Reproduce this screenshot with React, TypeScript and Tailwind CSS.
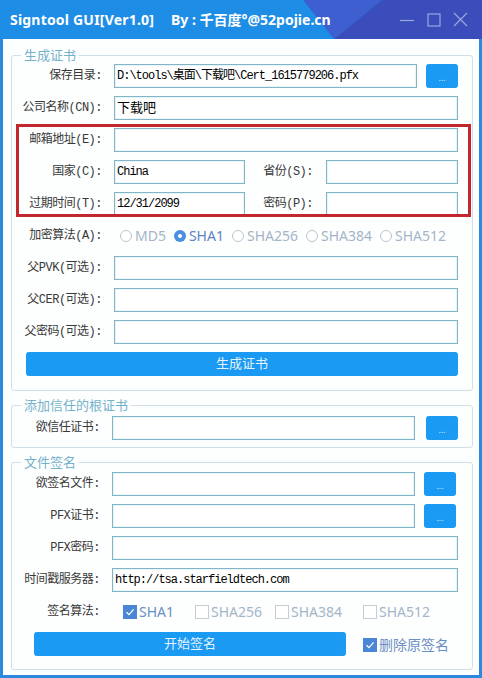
import React from 'react';

const mono = "font-['Liberation_Mono','Noto_Sans_CJK_SC',monospace]";
const ui = "font-['Noto_Sans','Noto_Sans_CJK_SC',sans-serif]";

function Label({ text, w = 'w-[90px]' }: { text: string; w?: string }) {
  return (
    <div className={`${w} shrink-0 text-right text-[12px] leading-none text-[#383838] ${mono} tracking-[-0.5px]`}>
      {text}
    </div>
  );
}

function Field({ w, value = '', cjk = false }: { w: string; value?: string; cjk?: boolean }) {
  return (
    <div
      className={`${w} h-[24px] shrink-0 border border-[#84b5c7] bg-white shadow-[inset_0_0_0_1px_#e6f5f9] flex items-center px-[2px] text-[12px] text-black whitespace-nowrap overflow-hidden ${
        cjk ? ui + ' text-[13px]' : mono + ' tracking-[-1px]'
      }`}
    >
      {value}
    </div>
  );
}

function Browse() {
  return (
    <div className="w-[32px] h-[24px] shrink-0 rounded-[3px] bg-[#1a9af2] flex items-center justify-center text-[9px] text-[#cfe9ff] pt-[4px]">
      ...
    </div>
  );
}

function Radio({ label, checked = false }: { label: string; checked?: boolean }) {
  return (
    <div className="flex items-center gap-[3px]">
      <div
        className={`w-[12px] h-[12px] rounded-full flex items-center justify-center ${
          checked ? 'bg-[#4b8fe2]' : 'border border-[#bcc6ce] bg-white'
        }`}
      >
        {checked && <div className="w-[4px] h-[4px] rounded-full bg-white" />}
      </div>
      <span className={`text-[14px] leading-none ${checked ? 'text-[#5d84c2]' : 'text-[#a3b5c8]'}`}>{label}</span>
    </div>
  );
}

function Check({ label, checked = false, w }: { label: string; checked?: boolean; w?: string }) {
  return (
    <div className={`flex items-center gap-[2px] ${w ?? ''}`}>
      <div
        className={`w-[14px] h-[14px] shrink-0 flex items-center justify-center ${
          checked ? 'bg-[#4a86d6]' : 'border border-[#c4ccd4] bg-white'
        }`}
      >
        {checked && (
          <svg width="10" height="10" viewBox="0 0 10 10">
            <path d="M1.5 5.2 L4 7.6 L8.6 2.4" fill="none" stroke="#fff" strokeWidth="1.3" />
          </svg>
        )}
      </div>
      <span className={`text-[14px] leading-none ${checked ? 'text-[#6b8fc4]' : 'text-[#a3b5c8]'}`}>{label}</span>
    </div>
  );
}

function Group({ title, className, children }: { title: string; className?: string; children: React.ReactNode }) {
  return (
    <fieldset className={`relative border border-[#cfe0e8] rounded-[3px] ${className ?? ''}`}>
      <legend className={`ml-[9px] px-[3px] h-[18px] text-[13px] leading-[18px] text-[#74b2cc] ${ui}`}>{title}</legend>
      {children}
    </fieldset>
  );
}

export default function App() {
  return (
    <div className={`w-[482px] h-[678px] bg-[#2b89de] flex flex-col overflow-hidden ${ui}`}>
      {/* title bar */}
      <div className="relative h-[39px] shrink-0 bg-[#1e8de5] flex items-center">
        <div className="absolute inset-0 bg-[#3d5fd0] [clip-path:polygon(303px_0,382px_0,334px_39px)]" />
        <div className="absolute inset-0 bg-[#3b4dba] [clip-path:polygon(382px_0,482px_0,482px_39px,334px_39px)]" />
        <div className="relative pl-[10px] text-white font-bold text-[14px] whitespace-nowrap flex gap-[17px]">
          <span className="tracking-[0.2px]">Signtool GUI[Ver1.0]</span>
          <span>By : 千百度°@52pojie.cn</span>
        </div>
        <div className="relative ml-auto mr-[14px] flex items-center gap-[12px]">
          <svg width="16" height="14" viewBox="0 0 16 14">
            <path d="M1 7.5 H15" stroke="#9aa8dc" strokeWidth="1.2" />
          </svg>
          <svg width="14" height="14" viewBox="0 0 14 14">
            <rect x="1" y="1" width="12" height="12" fill="none" stroke="#9aa8dc" strokeWidth="1.2" />
          </svg>
          <svg width="15" height="15" viewBox="0 0 15 15">
            <path d="M1 1 L14 14 M14 1 L1 14" stroke="#9aa8dc" strokeWidth="1.2" />
          </svg>
        </div>
      </div>

      {/* content */}
      <div className="flex-1 mx-[3px] mb-[3px] bg-[#fdfefe] pl-[8px] pr-[6px]">
        <Group title="生成证书" className="mt-[7px] pb-[14px]">
          <div className="flex flex-col gap-[8px]">
            <div className="flex items-center">
              <Label text="保存目录:" />
              <div className="ml-[12px] flex gap-[9px]">
                <Field w="w-[303px]" value="D:\tools\桌面\下载吧\Cert_1615779206.pfx" />
                <Browse />
              </div>
            </div>
            <div className="flex items-center">
              <Label text="公司名称(CN):" />
              <div className="ml-[12px]">
                <Field w="w-[344px]" value="下载吧" cjk />
              </div>
            </div>
            <div className="flex items-center">
              <Label text="邮箱地址(E):" />
              <div className="ml-[12px]">
                <Field w="w-[344px]" />
              </div>
            </div>
            <div className="flex items-center">
              <Label text="国家(C):" />
              <div className="ml-[12px]">
                <Field w="w-[131px]" value="China" />
              </div>
              <Label text="省份(S):" w="w-[68px]" />
              <div className="ml-[13px]">
                <Field w="w-[132px]" />
              </div>
            </div>
            <div className="flex items-center">
              <Label text="过期时间(T):" />
              <div className="ml-[12px]">
                <Field w="w-[131px]" value="12/31/2099" />
              </div>
              <Label text="密码(P):" w="w-[68px]" />
              <div className="ml-[13px]">
                <Field w="w-[132px]" />
              </div>
            </div>
            <div className="flex items-center h-[24px]">
              <Label text="加密算法(A):" />
              <div className="ml-[18px] flex items-center gap-[8px]">
                <Radio label="MD5" />
                <Radio label="SHA1" checked />
                <Radio label="SHA256" />
                <Radio label="SHA384" />
                <Radio label="SHA512" />
              </div>
            </div>
            <div className="flex items-center">
              <Label text="父PVK(可选):" />
              <div className="ml-[12px]">
                <Field w="w-[344px]" />
              </div>
            </div>
            <div className="flex items-center">
              <Label text="父CER(可选):" />
              <div className="ml-[12px]">
                <Field w="w-[344px]" />
              </div>
            </div>
            <div className="flex items-center">
              <Label text="父密码(可选):" />
              <div className="ml-[12px]">
                <Field w="w-[344px]" />
              </div>
            </div>
            <div className="ml-[14px] w-[432px] h-[24px] rounded-[3px] bg-[#1a9af2] flex items-center justify-center text-[13px] text-[#e6f3ff]">
              生成证书
            </div>
          </div>
          <div className="absolute left-[4px] top-[60px] w-[455px] h-[93px] border-[3px] border-[#c1272d] pointer-events-none" />
        </Group>

        <Group title="添加信任的根证书" className="mt-[5px] pb-[7px]">
          <div className="mt-[2px] flex items-center">
            <Label text="欲信任证书:" w="w-[88px]" />
            <div className="ml-[12px] flex gap-[11px]">
              <Field w="w-[303px]" />
              <Browse />
            </div>
          </div>
        </Group>

        <Group title="文件签名" className="mt-[5px] pb-[13px]">
          <div className="mt-[1px] flex flex-col gap-[8px]">
            <div className="flex items-center">
              <Label text="欲签名文件:" w="w-[88px]" />
              <div className="ml-[12px] flex gap-[9px]">
                <Field w="w-[303px]" />
                <Browse />
              </div>
            </div>
            <div className="flex items-center">
              <Label text="PFX证书:" w="w-[88px]" />
              <div className="ml-[12px] flex gap-[9px]">
                <Field w="w-[303px]" />
                <Browse />
              </div>
            </div>
            <div className="flex items-center">
              <Label text="PFX密码:" w="w-[88px]" />
              <div className="ml-[12px]">
                <Field w="w-[346px]" />
              </div>
            </div>
            <div className="flex items-center">
              <Label text="时间戳服务器:" w="w-[88px]" />
              <div className="ml-[12px]">
                <Field w="w-[346px]" value="http://tsa.starfieldtech.com" />
              </div>
            </div>
            <div className="flex items-center h-[24px]">
              <Label text="签名算法:" w="w-[88px]" />
              <div className="ml-[23px] flex items-center">
                <Check label="SHA1" checked w="w-[72px]" />
                <Check label="SHA256" w="w-[80px]" />
                <Check label="SHA384" w="w-[88px]" />
                <Check label="SHA512" />
              </div>
            </div>
            <div className="flex items-center">
              <div className="ml-[22px] w-[312px] h-[24px] rounded-[3px] bg-[#1a9af2] flex items-center justify-center text-[13px] text-[#e6f3ff]">
                开始签名
              </div>
              <div className="ml-[17px] pt-[2px]">
                <Check label="删除原签名" checked />
              </div>
            </div>
          </div>
        </Group>
      </div>
    </div>
  );
}
